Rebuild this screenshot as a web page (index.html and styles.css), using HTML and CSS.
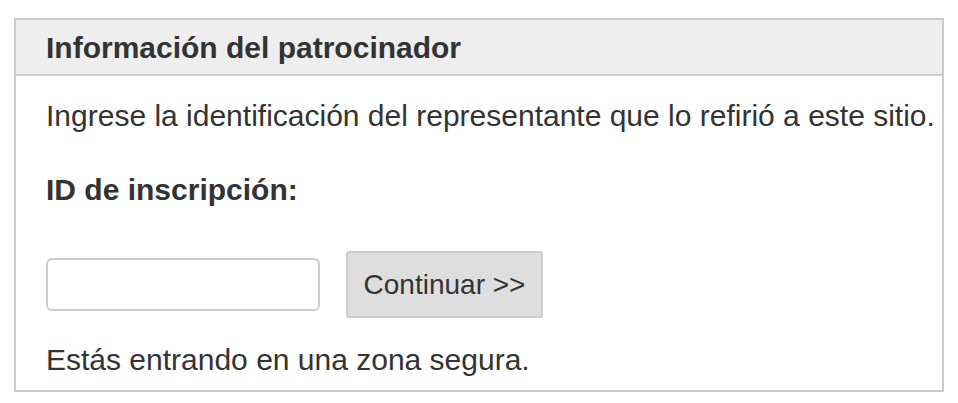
FILE: index.html
```html
<!DOCTYPE html>
<html lang="es">
<head>
    <meta charset="utf-8">
    <title>Información del patrocinador</title>
    <link rel="stylesheet" href="styles.css">
</head>
<body>
    <div class="sponsor-box">
        <div class="sponsor-header">Información del patrocinador</div>
        <div class="sponsor-body">
            <p class="intro">Ingrese la identificación del representante que lo refirió a este sitio.</p>
            <label class="field-label" for="sponsorId">ID de inscripción:</label>
            <form class="sponsor-form" onsubmit="return false">
                <input type="text" id="sponsorId" class="sponsor-input">
                <button type="submit" class="continue-btn">Continuar &gt;&gt;</button>
            </form>
            <p class="secure-note">Estás entrando en una zona segura.</p>
        </div>
    </div>
</body>
</html>
```

FILE: styles.css
```css
body {
    margin: 0;
    padding: 18px 14px;
    font-family: "Liberation Sans", Arial, sans-serif;
    color: #333;
    background: #fff;
}

.sponsor-box {
    width: 926px;
    border: 2px solid #ccc;
}

.sponsor-header {
    background: #eee;
    border-bottom: 2px solid #ccc;
    padding: 0 30px;
    height: 54px;
    line-height: 56px;
    font-size: 30px;
    font-weight: bold;
    white-space: nowrap;
}

.sponsor-body {
    padding: 22px 30px 12px;
}

.intro {
    margin: 0;
    font-size: 30px;
    line-height: 36px;
    white-space: nowrap;
}

.field-label {
    display: block;
    margin-top: 38px;
    font-size: 30px;
    font-weight: bold;
    line-height: 36px;
}

.sponsor-form {
    display: flex;
    align-items: center;
    gap: 26px;
    margin-top: 43px;
}

.sponsor-input {
    width: 274px;
    height: 53px;
    margin: 0;
    border: 2px solid #ccc;
    border-radius: 6px;
    box-sizing: border-box;
    font-size: 28px;
    padding: 0 10px;
}

.continue-btn {
    height: 67px;
    width: 197px;
    padding: 0;
    margin: 0;
    background: #dedede;
    border: 2px solid #ccc;
    border-radius: 3px;
    font-family: "Liberation Sans", Arial, sans-serif;
    font-size: 28px;
    color: #333;
}

.secure-note {
    margin: 24px 0 0;
    font-size: 30px;
    line-height: 36px;
}
```
